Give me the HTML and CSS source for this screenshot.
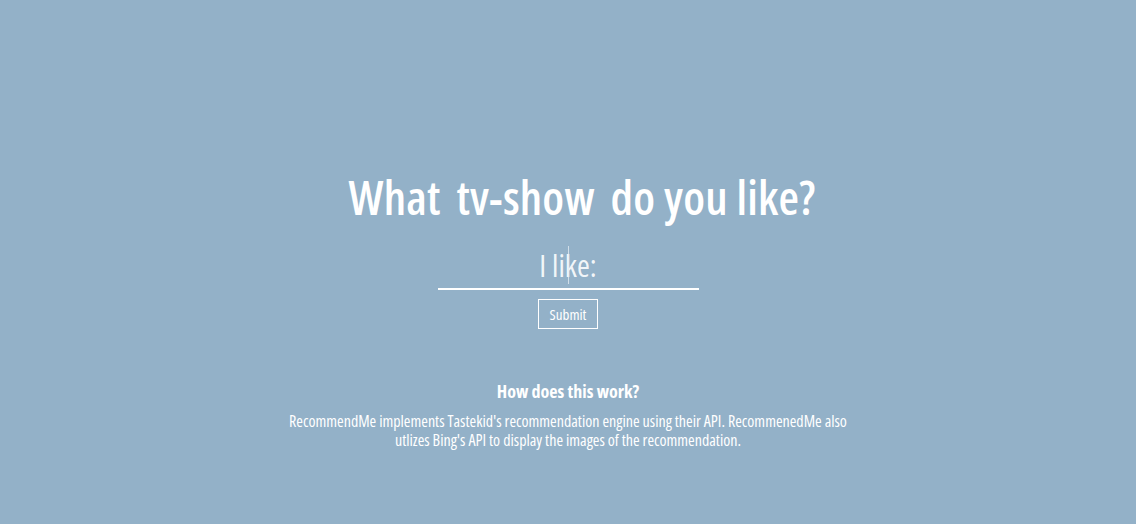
FILE: index.html
```html
<!DOCTYPE html>
<html>
<head>
<meta charset="utf-8">
<link rel="stylesheet" href="styles.css">
</head>
<body>
<main class="page">
  <h1 class="title">What <span class="gap">tv-show</span> do you like?</h1>
  <form class="search" onsubmit="return false">
    <div class="field">
      <input class="like-input" type="text" placeholder="I like:">
      <span class="caret"></span>
    </div>
    <button class="submit" type="submit">Submit</button>
  </form>
  <section class="about">
    <h2 class="about-title">How does this work?</h2>
    <p class="about-text">RecommendMe implements Tastekid's recommendation engine using their API. RecommenedMe also utlizes Bing's API to display the images of the recommendation.</p>
  </section>
</main>
</body>
</html>
```
FILE: styles.css
```css
html, body {
  margin: 0;
  padding: 0;
  height: 100%;
}
body {
  background: #93b1c8;
  color: #fff;
  font-family: "Open Sans", "Liberation Sans", sans-serif;
  font-stretch: condensed;
}
.page {
  display: flex;
  flex-direction: column;
  align-items: center;
  padding-top: 163px;
}
.title {
  margin: 0;
  font-size: 47px;
  font-weight: 600;
  line-height: 68px;
  padding-left: 28px;
  letter-spacing: 0.2px;
}
.gap {
  margin: 0 7px;
}
.search {
  display: flex;
  flex-direction: column;
  align-items: center;
  margin-top: 13px;
}
.field {
  position: relative;
}
.caret {
  position: absolute;
  left: 130px;
  top: 2px;
  width: 1px;
  height: 38px;
  background: rgba(230, 238, 244, 0.75);
}
.like-input {
  display: block;
  width: 261px;
  box-sizing: border-box;
  background: transparent;
  border: none;
  border-bottom: 2px solid #fff;
  outline: none;
  color: #fff;
  font-family: inherit;
  font-stretch: condensed;
  font-size: 31px;
  font-weight: 400;
  text-align: center;
  padding: 0 0 3px;
  height: 46px;
}
.like-input::placeholder {
  color: rgba(255,255,255,0.9);
}
.submit {
  margin-top: 9px;
  width: 60px;
  height: 30px;
  background: transparent;
  border: 1px solid #fff;
  color: #fff;
  font-family: inherit;
  font-stretch: condensed;
  font-size: 15px;
  padding: 0;
}
.about {
  margin-top: 50px;
  display: flex;
  flex-direction: column;
  align-items: center;
  width: 572px;
  text-align: center;
}
.about-title {
  margin: 0;
  font-size: 18px;
  font-weight: bold;
  line-height: 24px;
}
.about-text {
  margin: 9px 0 0;
  font-size: 16px;
  line-height: 19px;
}
```
